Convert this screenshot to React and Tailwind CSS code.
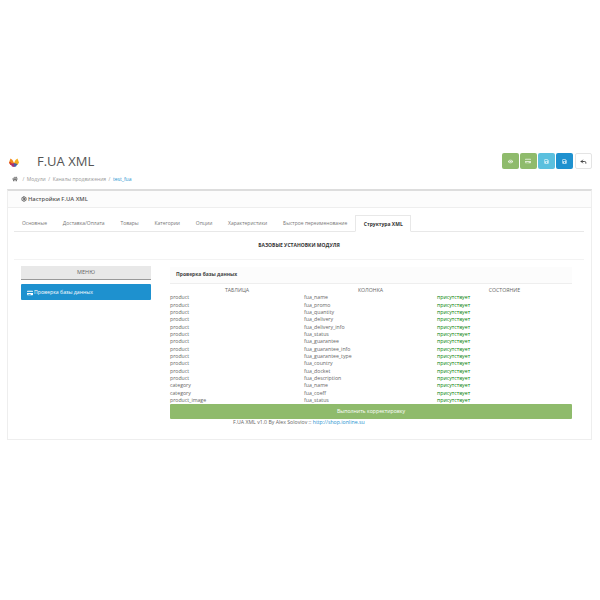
import React from "react";
import { Settings, Reply } from "lucide-react";
import { FaHome, FaSave, FaCreditCard, FaEye } from "react-icons/fa";

const rows = [
  ["product", "fua_name"],
  ["product", "fua_promo"],
  ["product", "fua_quantity"],
  ["product", "fua_delivery"],
  ["product", "fua_delivery_info"],
  ["product", "fua_status"],
  ["product", "fua_guarantee"],
  ["product", "fua_guarantee_info"],
  ["product", "fua_guarantee_type"],
  ["product", "fua_country"],
  ["product", "fua_docket"],
  ["product", "fua_description"],
  ["category", "fua_name"],
  ["category", "fua_coeff"],
  ["product_image", "fua_status"],
];

const tabs = [
  "Основные",
  "Доставка/Оплата",
  "Товары",
  "Категории",
  "Опции",
  "Характеристики",
  "Быстрое переименование",
];

function Logo() {
  return (
    <svg viewBox="0 0 20 18" className="w-[10px] h-[9px] mt-[3px]">
      <path d="M0 9 L3 1 L7 4 L10 10 L10 14 L3 14 Z" fill="#f0861c" />
      <path d="M20 9 L17 1 L13 4 L10 10 L10 14 L17 14 Z" fill="#f4b01e" />
      <path d="M0 9 L3 14 L8 14 L3 8 Z" fill="#d93a2e" />
      <path d="M3 12 L10 10 L10 18 L6 17 Z" fill="#a83276" />
      <path d="M17 12 L10 10 L10 18 L14 17 Z" fill="#4a5fa8" />
    </svg>
  );
}

function IconButton({ color, children }) {
  return (
    <div className={`w-[17px] h-[16px] rounded-[2px] flex items-center justify-center ${color}`}>
      {children}
    </div>
  );
}

export default function App() {
  return (
    <div
      className="w-[600px] h-[600px] bg-white pt-[153px] text-[#666]"
      style={{ fontFamily: '"Open Sans", sans-serif' }}
    >
      {/* Header */}
      <div className="flex items-start justify-between pl-[9px] pr-[8.5px] h-[36px]">
        <div>
          <div className="flex items-center h-[16px]">
            <Logo />
            <h1 className="ml-[18px] text-[13px] leading-[16px] text-[#555] font-normal">F.UA XML</h1>
          </div>
          <div className="flex items-center gap-[2.5px] mt-[6px] ml-[3px] text-[5px] leading-[8px] text-[#999]">
            <FaHome size={6} color="#777" />
            <span className="ml-[2px]">/</span>
            <span>Модули</span>
            <span>/</span>
            <span>Каналы продвижения</span>
            <span>/</span>
            <span className="text-[#1e91cf]">test_fua</span>
          </div>
        </div>
        <div className="flex gap-[1.25px]">
          <IconButton color="bg-[#8fbb6c]"><FaEye size={5} color="#eef5e8" /></IconButton>
          <IconButton color="bg-[#8fbb6c]"><FaCreditCard size={6} color="#dcead0" /></IconButton>
          <IconButton color="bg-[#5bc0de]"><FaSave size={5} color="#d5eff7" /></IconButton>
          <IconButton color="bg-[#1e91cf]"><FaSave size={5} color="#cfe8f6" /></IconButton>
          <div className="w-[17px] h-[16px] rounded-[2px] border border-[#e4e4e4] bg-white flex items-center justify-center">
            <Reply size={7} color="#333" strokeWidth={3} />
          </div>
        </div>
      </div>

      {/* Panel */}
      <div className="mx-[7px] w-[585px] h-[251px] border border-[#eee] border-t-2 border-t-[#ddd]">
        <div className="h-[17px] bg-[#fcfcfc] border-b border-[#eee] pl-[13px] flex items-center gap-[1px] text-[5.8px] text-[#555] font-semibold">
          <Settings size={6} strokeWidth={3} color="#444" />
          <span>Настройки F.UA XML</span>
        </div>

        <div className="px-[6px] pt-[7px]">
          {/* Tabs */}
          <div className="flex h-[17px] w-[570px] border-b border-[#e8e8e8] text-[5px] text-[#777]">
            {tabs.map((t) => (
              <div key={t} className="px-[7.9px] leading-[16px] whitespace-nowrap">{t}</div>
            ))}
            <div className="px-[7.5px] h-[17px] leading-[16px] bg-white border border-[#e8e8e8] border-b-white font-bold text-[#333] whitespace-nowrap">
              Структура XML
            </div>
          </div>

          <div className="h-[28px] w-[570px] border-b border-[#f3f3f3] flex items-center justify-center text-[5px] font-bold text-[#333]">
            БАЗОВЫЕ УСТАНОВКИ МОДУЛЯ
          </div>

          <div className="flex mt-[6px] pl-[7px]">
            {/* Menu */}
            <div className="w-[130px]">
              <div className="h-[14px] bg-[#e8e8e8] border-b border-[#999] flex items-center justify-center text-[5.5px] text-[#666]">
                МЕНЮ
              </div>
              <div className="mt-[4px] h-[16px] rounded-[1px] bg-[#1e91cf] flex items-center gap-[1px] pl-[6px] pt-[1px] text-[5.2px] text-white">
                <FaCreditCard size={6} color="white" />
                <span>Проверка базы данных</span>
              </div>
            </div>

            {/* Check table */}
            <div className="ml-[19px] w-[402px] pt-[1px]">
              <div className="h-[17px] bg-[#fcfcfc] border-b border-[#eee] pl-[6px] flex items-center text-[5px] font-bold text-[#444]">
                Проверка базы данных
              </div>
              <div className="grid grid-cols-[134px_133px_1fr] mt-[3px] text-[5.2px] leading-[7.33px]">
                <div className="text-center">ТАБЛИЦА</div>
                <div className="text-center">КОЛОНКА</div>
                <div className="text-center">СОСТОЯНИЕ</div>
              </div>
              <div className="text-[5.2px] leading-[7.33px]">
                {rows.map(([table, col], i) => (
                  <div key={i} className="grid grid-cols-[134px_133px_1fr]">
                    <div>{table}</div>
                    <div>{col}</div>
                    <div className="text-[#008000]">присутствует</div>
                  </div>
                ))}
              </div>
              <div className="h-[15px] rounded-[1px] bg-[#8fbb6c] flex items-center justify-center text-[5.2px] text-white">
                Выполнить корректировку
              </div>
              <div className="ml-[63px] text-[5.2px] leading-[7px] text-[#666]">
                F.UA XML v1.0 By Alex Soloviov :: <span className="text-[#1e91cf]">http://shop.ionline.su</span>
              </div>
            </div>
          </div>
        </div>
      </div>
    </div>
  );
}
